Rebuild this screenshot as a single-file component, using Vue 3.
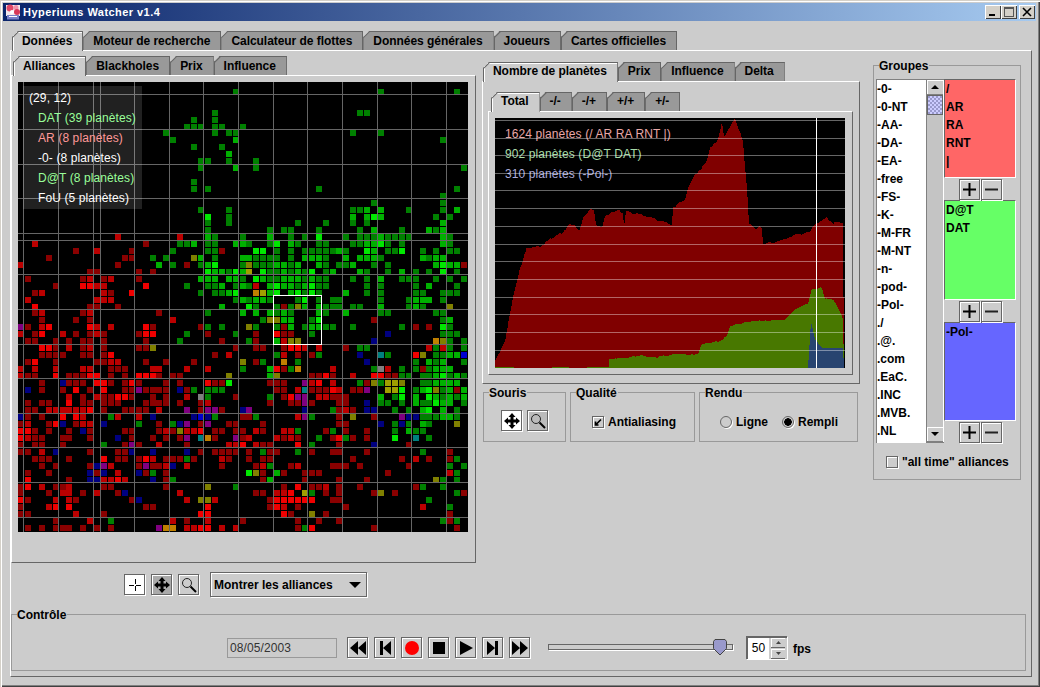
<script setup>
const mainTabs = ['Données', 'Moteur de recherche', 'Calculateur de flottes', 'Données générales', 'Joueurs', 'Cartes officielles']
const mapTabs = ['Alliances', 'Blackholes', 'Prix', 'Influence']
const chartTabs = ['Nombre de planètes', 'Prix', 'Influence', 'Delta']
const chartSubTabs = ['Total', '-/-', '-/+', '+/+', '+/-']
const alliances = ['-0-', '-0-NT', '-AA-', '-DA-', '-EA-', '-free', '-FS-', '-K-', '-M-FR', '-M-NT', '-n-', '-pod-', '-Pol-', './', '.@.', '.com', '.EaC.', '.INC', '.MVB.', '.NL']
const groups = [
  { color: 'red', names: ['/', 'AR', 'RA', 'RNT', '|'] },
  { color: 'green', names: ['D@T', 'DAT'] },
  { color: 'blue', names: ['-Pol-'] },
]

const colors = {
  r: '#8a0000', s: '#bb0000', R: '#f00000',
  g: '#008000', G: '#00b000', H: '#00e800',
  b: '#000080', B: '#0000d0', P: '#800080',
  o: '#808000', y: '#a0a000', O: '#c08000',
  t: '#008080', a: '#808080',
}

// one line per row of the map, each token is <colour><column>
const rows = {
  1: 'g31 g52 g63',
  4: 'g28 g49 g50',
  5: 'g25 g28',
  6: 'g24 g25 g26 g28 g29 g32',
  7: 'g21 g28 g30 g31 g48 g52',
  8: 'g22 G31 g61',
  9: 'g25 g29',
  10: 'G30',
  11: 'g26 g27 g30 g34',
  12: 'g26 G31 g34 g64',
  14: 'g25',
  15: 'g25 g27 g43 g63',
  16: 'g61',
  17: 'g51 g61',
  18: 'g26 g30 g48 g49 G50 G52 g56 g61 G63',
  19: 'H27 g30 G48 G50 H51 G52 g60 g62',
  20: 'g27 g30 g40 g44 g48 g50 G61',
  21: 'g27 g36 g38 g39 g43 g49 G51 g55 G59 g60 G61',
  22: 's14 s23 G27 g28 g32 G36 g39 g41 H43 g47 g49 g50 g51 G52 g53 g54 g55 g56 G61 g62',
  23: 's2 r18 g23 g24 G25 g27 g28 G31 G32 g33 g36 H37 G39 g40 g43 g44 g48 g49 G50 G51 H52 g53 g55 G61 g62',
  24: 'r8 s11 r16 g22 g27 g28 r29 H34 H35 g37 g39 g41 g42 g43 g44 g45 G46 g47 H50 G51 g53 g54 H55 g58 g60 g62 g63',
  25: 'r4 r15 r16 g19 g21 o25 G26 g28 G32 G33 g34 g35 g36 g37 g39 G41 G42 G43 g44 G47 G49 G50 G51 g52 G58 g59 G60 G61',
  26: 's0 r14 G20 g22 r24 g26 G27 H28 g32 o33 g34 g35 g36 G37 G38 g39 G40 G43 g44 g46 g47 G48 g51 g53 G60 H61 G62 G63 r64',
  27: 'r10 r11 r17 r19 H27 G28 G29 g30 H31 G32 y33 H35 g36 g37 G38 g39 G40 g41 H42 g44 G45 G49 g50 g53 G55 g57 g59 H61 g63',
  28: 'r1 r9 s10 r12 s13 r17 G26 G27 G28 G30 G31 g32 H34 G35 g36 g37 G38 G39 G40 g41 G42 g43 g44 g48 g50 G52 g55 g56 g57 g60 g62 g64',
  29: 'r5 R9 R10 s11 s12 R18 g24 g27 g28 G29 g31 G32 g33 s34 G36 H37 G38 G39 g40 G41 H42 g43 g44 g50 g52 g57 G59 g63',
  30: 'r2 s3 s12 r13 R16 g26 g28 g29 G30 H31 O34 y35 G36 H37 G39 H40 g41 H42 g43 G47 g50 g52 g57 g58 g61 g62 g63',
  31: 's1 s11 s12 s13 g31 G32 g33 G34 G35 g36 g40 H41 g43 g45 g46 g52 g56 G57 G58 G59 g61',
  32: 'R2 r10 r11 r14 G29 H33 g34 g37 r38 g39 o40 G41 G43 g44 g45 g46 g48 g49 G52 g56 G57 g58 o62',
  33: 'r2 s3 r9 s10 r20 g27 G32 G34 G36 g37 G38 g39 G43 g44 G47 g52 g53 g60 g61',
  34: 'r3 r8 r10 s22 g35 o36 o37 G38 G39 g42 H43 r51 g61 G62',
  35: 'P0 r1 s3 R4 R10 s11 s13 R18 r19 r26 g27 g29 o33 g34 g37 r38 G39 g41 G42 G43 g44 g45 g48 g55 r57 r59 H61 g62',
  36: 's0 r2 R3 s6 r8 r10 s11 r12 r17 R18 R19 g24 r27 g31 r34 R37 r38 r39 g42 b53 g61 g62 g63',
  37: 'r1 r2 r5 r7 r9 r10 r12 r18 g23 r29 g33 r34 G37 s38 o39 o40 b51 O60 o61 g62 g64',
  38: 'R3 R4 r5 s7 r9 s10 r12 r17 r18 o19 r31 r34 r35 r38 R39 R40 s41 s43 r47 g49 g50 s59 g60 s61 g62 g64',
  39: 'r3 r4 r5 r6 r9 r10 r12 R13 r28 s30 g37 s38 r40 r42 g43 b49 t52 g53 R57 o58 g60 g61 G62 G63 B64',
  40: 'r1 R2 r5 r11 r12 s13 s14 r18 r21 r25 o32 r34 g35 O38 g40 b50 g57 G59 g60 G61 g64',
  41: 's0 s2 s5 s9 s10 r13 r14 r15 s19 s20 s24 s27 g32 G36 R37 r38 g39 O40 s45 g51 a52 s53 g55 g57 r58 g59 G60 G61 G62',
  42: 's0 r1 r2 R5 r7 r8 r9 R10 R11 r13 r15 R17 R18 R19 r20 r22 r23 o30 G36 o37 r42 r43 R44 r45 s48 R51 R52 r53 r54 g55 g56 g58 g59 G60 H61 g62 G63 g64',
  43: 'r3 b6 r7 r8 r9 R11 R12 r13 r15 R16 r17 r21 r23 R27 r28 r29 H30 r36 r37 r38 P41 s42 R43 s45 g49 r50 o51 g52 y53 y54 o55 g58 g59 G60 G61 G62 G63',
  44: 'b1 r3 r6 R8 r10 R12 r15 r16 P17 r18 r19 r20 r21 b23 r24 g25 g27 g28 g29 r37 r38 s40 t41 r42 r43 r44 R45 s46 r48 r49 P50 y53 y54 H55 g57 G58 H59 o60 g61 G62 r63 G64',
  45: 's7 r9 s11 r12 r13 R14 R15 r16 r19 r21 s24 a26 g27 r31 g36 r38 R39 P40 P41 s43 s44 r45 r46 r47 G52 g54 H55 G57 H59 G60 g61 G62 g63 G64',
  46: 'r1 r3 r4 R7 r9 r10 r12 r13 r14 r18 r19 r20 r21 r23 r26 s27 r36 r39 r40 P41 r42 r46 r47 b50 g52 g53 g55 G57 g58 g59 H60 G61 G62 g64',
  47: 'r1 r2 s4 s5 s6 s7 s8 s9 R10 r12 r15 r16 r17 r18 s20 P24 r26 P27 P28 r29 b32 P33 b41 g45 r46 s47 r48 b50 b51 g54 g56 G58 H59 G61 g63',
  48: 'b0 r1 r3 R6 R8 s9 g13 s14 s17 b19 b25 B26 b27 g28 r32 r33 g34 s40 P41 g42 r46 o48 r51 P55 b56 b57 g58 g59 g60 G61 G62 g63',
  49: 'r0 s1 r4 R5 b6 r8 s9 s10 b12 g17 r20 g22 b23 P24 r26 P27 r30 r31 r35 r46 r47 b52 g54 b55 g56 G58 g59 o63',
  50: 'R0 R1 r2 r4 r7 b9 r10 r15 r16 r20 s21 r22 o23 s24 s25 R26 r28 r29 r31 r32 s34 r35 s38 s39 g40 r44 g45 r47 r50 g54 G56 g57 g58',
  51: 'R0 s1 r2 r3 r6 r7 r10 b14 r16 r19 r21 r23 P24 t26 O27 r28 P31 r32 s33 s37 r38 s39 r40 g43 r45 R46 g47 r48 r50 H54 t57 g59',
  52: 'r0 r2 r3 r6 g12 r15 P16 r17 s20 r24 s30 s31 R32 s34 r35 r36 R40 g42 r46 b51 r56',
  53: 'r0 r1 s3 b5 r10 r14 r15 b16 b19 b24 r26 r28 r29 r30 r31 r33 g35 r36 r37 g40 r42 r45 r46 r50 g58 r62',
  54: 'r2 r3 r4 r7 R12 r14 r15 r17 R18 s19 r21 r22 r23 g24 r25 s29 r30 r33 r35 r36 r48 r55 s57 r59 r62 g63',
  55: 'r3 r5 r10 b11 P12 s13 r17 P18 r19 r20 s21 b22 s24 r29 r34 s35 g36 r39 s40 r45 r46 r47 r49 r56 g62 g64',
  56: 'r1 r4 b10 r11 b12 s14 b17 r18 g19 r21 H33 o34 r35 G37 r38 r41 r42 r43 r53 s62 g63',
  57: 'R1 r7 b10 b11 s12 s13 R14 s15 b19 r21 g22 r35 G36 r41 r46 r50 o60 g61 g63',
  58: 'r0 R1 s3 r5 r6 s7 r12 r13 r21 o27 g31 r38 R40 r42 r43 s44 r46 r49 r57 g58 g61',
  59: 'r0 r4 s6 s7 r9 s11 r14 b15 s23 r34 r35 s37 s38 R39 y41 g42 r44 r46 r51 o52 r54 g63 r64',
  60: 'R0 r1 s5 s7 r8 r16 b17 s24 o26 o27 s28 r36 R37 R38 R39 R40 R41 R42 r45 r46 g59',
  61: 'r0 s4 R5 R7 r18 r19 R27 r36 R37 s38 r40 r47 s58 g62',
  62: 'r0 r1 s8 r12 R26 R27 R38 r39 o42 r44 r62',
  63: 'r5 s10 g13 s22 r24 s27 r32 r40 r43 r46 g61 r62 g63',
  64: 'r1 r3 r5 r6 r7 r9 r11 r13 P20 O21 O22 s24 s25 R26 R27 s29 s31 r40 g41 R42 r51 r63',
}

const pitch = 450 / 65
const cells = Object.entries(rows).flatMap(([row, tokens]) =>
  tokens.split(' ').map((token) => ({
    x: 18 + Math.round(Number(token.slice(1)) * pitch),
    y: 82 + Math.round(Number(row) * pitch),
    fill: colors[token[0]],
  }))
)

const mapHLines = [94, 129, 164, 198, 233, 240, 274, 309, 344, 378, 413, 447, 482, 517]
const mapVLines = [23, 58, 93, 100, 134, 169, 203, 238, 273, 307, 342, 377, 411, 446]
const legend = [
  { text: 'DAT (39 planètes)', color: '#99ff99' },
  { text: 'AR (8 planètes)', color: '#ff9999' },
  { text: '-0- (8 planètes)', color: '#ffffff' },
  { text: 'D@T (8 planètes)', color: '#99ff99' },
  { text: 'FoU (5 planètes)', color: '#ffffff' },
]

// the curves are noisy day by day: walk along the outline and shake it a little
function jagged(outline, amp) {
  const pts = outline.split(' ').map((p) => p.split(',').map(Number))
  const out = []
  for (let i = 0; i < pts.length - 1; i++) {
    const [x0, y0] = pts[i]
    const [x1, y1] = pts[i + 1]
    const steps = Math.max(1, Math.floor((x1 - x0) / 2))
    for (let k = 0; k < steps; k++) {
      const x = x0 + ((x1 - x0) * k) / steps
      const y = y0 + ((y1 - y0) * k) / steps
      const noise = y < 366 ? amp * Math.sin(x * 12.9898) * Math.cos(x * 4.1414) : 0
      out.push(`${x},${(y + noise).toFixed(1)}`)
    }
  }
  const last = pts[pts.length - 1]
  out.push(`${last[0]},${last[1]}`)
  return out.join(' ')
}

const redArea = jagged('495,367 495,360 500,350 505,340 513,297 520,267 526,250 526,248 532,246 540,246 550,238 562,232 570,223 575,225 579,230 583,217 590,209 594,209 596,223 602,227 605,215 612,212 617,209 623,212 624,226 626,211 635,212 645,215 657,218 672,223 673,207 680,201 685,200 688,188 693,177 703,165 707,160 710,148 718,138 722,122 724,136 730,125 735,117 738,125 743,141 747,188 749,223 757,228 759,225 762,228 763,243 780,240 793,235 810,232 814,223 827,217 833,222 843,221 844,367', 1.5)
const greenArea = jagged('495,367 495,366 513,366 514,367 552,367 552,366 568,366 569,367 587,367 587,366 609,366 609,358 623,357 640,354 657,356 677,353 690,354 698,353 701,343 720,340 727,335 730,325 747,321 772,319 785,318 797,307 808,303 812,288 822,287 825,298 833,298 838,307 843,318 844,367', 1)
const blueArea = '808,367 811,321 815,338 822,347 843,347 844,367'
const chartLines = [119, 137, 154, 172, 189, 207, 225, 243, 260, 278, 296, 313, 331, 349]
const chartLabels = [
  { text: '1624 planètes (/ AR RA RNT |)', y: 137, color: '#e8a8a8' },
  { text: '902 planètes (D@T DAT)', y: 157, color: '#a8dca8' },
  { text: '310 planètes (-Pol-)', y: 177, color: '#acacdc' },
]

const mediaIcons = [
  { d: 'M0 8 8 1V15ZM8 8 16 1V15Z', fill: '#000' },
  { d: 'M3 1H6V15H3ZM6 8 14 1V15Z', fill: '#000' },
  { d: 'M8 1A7 7 0 1 1 8 15 7 7 0 1 1 8 1Z', fill: '#f00' },
  { d: 'M2 2H14V14H2Z', fill: '#000' },
  { d: 'M2 1 15 8 2 15Z', fill: '#000' },
  { d: 'M2 1 10 8 2 15ZM10 1H13V15H10Z', fill: '#000' },
  { d: 'M0 1 8 8 0 15ZM8 1 16 8 8 15Z', fill: '#000' },
]
const moveIcon = 'M8 0 11.5 4H9.5V6.500H12V4.500L16 8 12 11.500V9.500H9.500V12H11.500L8 16 4.500 12H6.500V9.500H4V11.500L0 8 4 4.500V6.500H6.500V4H4.500Z'
</script>

<template>
  <div class="window">
    <div class="titlebar">
      <svg class="app-icon" width="16" height="16" viewBox="0 0 16 16">
        <path d="M1 1H15V12H1Z" fill="#f4e8ec" />
        <circle cx="5" cy="4" r="3.500" fill="#e04868" />
        <circle cx="11" cy="3.500" r="2.500" fill="#f090a8" />
        <circle cx="12" cy="8" r="3" fill="#d83858" />
        <circle cx="7" cy="8" r="2" fill="#fff" />
        <path d="M2 11H14V15.500H2Z" fill="#7880c8" />
        <path d="M4 12H12V13H4Z" fill="#fff" />
      </svg>
      <span class="title-text">Hyperiums Watcher v1.4</span>
      <div class="win-buttons">
        <span class="win-btn"><svg width="12" height="10" viewBox="0 0 12 10"><path d="M2 7H8V9H2Z" /></svg></span>
        <span class="win-btn"><svg width="12" height="10" viewBox="0 0 12 10"><path d="M1 0H11V10H1ZM2 2V9H10V2Z" fill-rule="evenodd" fill="#555" /></svg></span>
        <span class="win-btn close"><svg width="12" height="10" viewBox="0 0 12 10"><path d="M2 1 10 9M10 1 2 9" stroke="#000" stroke-width="1.600" /></svg></span>
      </div>
    </div>

    <div class="main">
      <div class="tabs">
        <div v-for="(t, i) in mainTabs" :key="t" class="tab" :class="{ active: i === 0 }">{{ t }}</div>
      </div>
      <div class="panel main-panel">
        <div class="content">
          <div class="left-col">
            <div class="tabs">
              <div v-for="(t, i) in mapTabs" :key="t" class="tab" :class="{ active: i === 0 }">{{ t }}</div>
            </div>
            <div class="panel map-panel">
              <div class="map">
                <svg width="450" height="450" viewBox="18 82 450 450" shape-rendering="crispEdges">
                  <rect x="18" y="82" width="450" height="450" fill="#000" />
                  <rect v-for="(c, i) in cells" :key="i" :x="c.x" :y="c.y" width="6" height="6" :fill="c.fill" />
                  <rect v-for="y in mapHLines" :key="'h' + y" x="18" :y="y" width="450" height="1" fill="#666" />
                  <rect v-for="x in mapVLines" :key="'v' + x" :x="x" y="82" width="1" height="450" fill="#666" />
                  <rect x="273.500" y="295.500" width="48" height="49" fill="none" stroke="#fff" />
                </svg>
                <div class="map-info">
                  <div class="map-coord">(29, 12)</div>
                  <div v-for="l in legend" :key="l.text" class="map-line" :style="{ color: l.color }">{{ l.text }}</div>
                </div>
              </div>
            </div>
            <div class="toolbar">
              <span class="btn btn-white">
                <svg width="16" height="16" viewBox="0 0 16 16" shape-rendering="crispEdges"><path d="M8 2V7M8 9V14M2 8H7M9 8H14" stroke="#000" fill="none" /></svg>
              </span>
              <span class="btn btn-dark">
                <svg width="16" height="16" viewBox="0 0 16 16"><path :d="moveIcon" /></svg>
              </span>
              <span class="btn">
                <svg width="16" height="16" viewBox="0 0 16 16"><circle cx="6" cy="6" r="4.500" fill="none" stroke="#222" /><path d="M9.500 9.500 15 15" stroke="#000" stroke-width="2" /></svg>
              </span>
              <div class="combo">
                <span>Montrer les alliances</span>
                <svg width="12" height="6" viewBox="0 0 12 6"><path d="M0 0H12L6 6Z" /></svg>
              </div>
            </div>
          </div>

          <div class="mid-col">
            <div class="tabs chart-tabs">
              <div v-for="(t, i) in chartTabs" :key="t" class="tab" :class="{ active: i === 0 }">{{ t }}</div>
            </div>
            <div class="panel chart-panel">
              <div class="tabs small-tabs">
                <div v-for="(t, i) in chartSubTabs" :key="t" class="tab" :class="{ active: i === 0, narrow: i > 0 }">{{ t }}</div>
              </div>
              <div class="panel inner-panel">
                <svg class="chart" width="350" height="250" viewBox="495 117 350 250" shape-rendering="crispEdges">
                  <rect x="495" y="117" width="350" height="250" fill="#000" />
                  <polygon :points="redArea" fill="#800000" />
                  <polygon :points="greenArea" fill="#487800" />
                  <polygon :points="blueArea" fill="#284470" />
                  <text v-for="l in chartLabels" :key="l.y" class="chart-label" x="505" :y="l.y" :fill="l.color">{{ l.text }}</text>
                  <rect v-for="y in chartLines" :key="y" x="495" :y="y" width="350" height="1" fill="#fff" fill-opacity="0.4" />
                  <rect x="816" y="117" width="1" height="250" fill="#fff" />
                </svg>
              </div>
            </div>
            <div class="options">
              <div class="group souris">
                <span class="group-title">Souris</span>
                <span class="btn btn-white">
                  <svg width="16" height="16" viewBox="0 0 16 16"><path :d="moveIcon" /></svg>
                </span>
                <span class="btn btn-soft">
                  <svg width="16" height="16" viewBox="0 0 16 16"><circle cx="6" cy="6" r="4.500" fill="none" stroke="#222" /><path d="M9.500 9.500 15 15" stroke="#000" stroke-width="2" /></svg>
                </span>
              </div>
              <div class="group qualite">
                <span class="group-title">Qualité</span>
                <span class="check checked">
                  <svg width="10" height="10" viewBox="0 0 10 10"><path d="M2.500 4.500V8H5.500M2.500 8 8 2.500" stroke="#000" stroke-width="1.700" fill="none" /></svg>
                </span>
                <span class="opt-label">Antialiasing</span>
              </div>
              <div class="group rendu">
                <span class="group-title">Rendu</span>
                <span class="radio"></span>
                <span class="opt-label ligne">Ligne</span>
                <span class="radio on"></span>
                <span class="opt-label">Rempli</span>
              </div>
            </div>
          </div>

          <div class="group groupes">
            <span class="group-title">Groupes</span>
            <div class="groupes-body">
              <div class="list-box">
                <div class="list">
                  <div v-for="a in alliances" :key="a" class="list-row">{{ a }}</div>
                </div>
                <div class="scrollbar">
                  <span class="scroll-btn"><svg width="8" height="4" viewBox="0 0 8 4"><path d="M4 0 8 4H0Z" /></svg></span>
                  <span class="scroll-thumb"></span>
                  <span class="scroll-track"></span>
                  <span class="scroll-btn"><svg width="8" height="4" viewBox="0 0 8 4"><path d="M0 0H8L4 4Z" /></svg></span>
                </div>
              </div>
              <div class="group-lists">
                <div v-for="g in groups" :key="g.color" class="group-block">
                  <div class="color-list" :class="g.color">
                    <div v-for="n in g.names" :key="n" class="list-row">{{ n }}</div>
                  </div>
                  <div class="plus-minus">
                    <span class="btn"><svg width="15" height="15" viewBox="0 0 15 15"><path d="M1 6.500H14V8.500H1ZM6.500 1H8.500V14H6.500Z" /></svg></span>
                    <span class="btn"><svg width="15" height="15" viewBox="0 0 15 15"><path d="M1 6.500H14V8.500H1Z" fill="#222" /></svg></span>
                  </div>
                </div>
              </div>
            </div>
            <div class="all-time">
              <span class="check"></span>
              <span class="opt-label">"all time" alliances</span>
            </div>
          </div>
        </div>

        <div class="group controle">
          <span class="group-title">Contrôle</span>
          <div class="date-field">08/05/2003</div>
          <div class="media">
            <span v-for="(m, i) in mediaIcons" :key="i" class="btn">
              <svg width="16" height="16" viewBox="0 0 16 16"><path :d="m.d" :fill="m.fill" /></svg>
            </span>
          </div>
          <div class="slider">
            <svg class="slider-thumb" width="16" height="17" viewBox="0 0 16 17">
              <path d="M1.500 2.500 3 .5H13L14.500 2.500V9.500L8 16 1.500 9.500Z" fill="#9999cc" stroke="#444" />
            </svg>
          </div>
          <div class="spinner">
            <span class="spin-value">50</span>
            <div class="spin-buttons">
              <span class="spin-btn"><svg width="5" height="3" viewBox="0 0 5 3"><path d="M2.500 0 5 3H0Z" fill="#444" /></svg></span>
              <span class="spin-btn"><svg width="5" height="3" viewBox="0 0 5 3"><path d="M0 0H5L2.500 3Z" fill="#444" /></svg></span>
            </div>
          </div>
          <span class="fps">fps</span>
        </div>
      </div>
    </div>
  </div>
</template>

<style>
html,
body {
  margin: 0;
  background: #cccccc;
}
</style>

<style scoped>
.window {
  box-sizing: border-box;
  width: 1040px;
  height: 687px;
  padding: 3px 4px 4px 3px;
  background: #cccccc;
  box-shadow: inset 1px 1px 0 #d4d0c8, inset 2px 2px 0 #fff, inset -1px -1px 0 #404040, inset -2px -2px 0 #808080;
  font: bold 12px "Liberation Sans", Arial, sans-serif;
  color: #000;
  overflow: hidden;
}

.titlebar {
  display: flex;
  align-items: center;
  height: 18px;
  padding-left: 2px;
  background: linear-gradient(90deg, #0a246a, #a6caf0);
}

.app-icon {
  margin-right: 2px;
}

.title-text {
  font-size: 11px;
  color: #fff;
  letter-spacing: 0.45px;
}

.win-buttons {
  display: flex;
  margin-left: auto;
  margin-right: 1px;
}

.win-btn {
  display: flex;
  align-items: center;
  justify-content: center;
  width: 16px;
  height: 14px;
  background: #d4d0c8;
  box-shadow: inset 1px 1px 0 #fff, inset -1px -1px 0 #404040;
}

.win-btn.close {
  margin-left: 2px;
}

.main {
  padding: 10px 0 0 7px;
}

.tabs {
  position: relative;
  z-index: 1;
  display: flex;
  height: 19px;
  padding-left: 2px;
}

.tab {
  position: relative;
  box-sizing: border-box;
  display: flex;
  align-items: center;
  height: 19px;
  padding: 0 10px 1px 9px;
  background: #999999;
  border-top: 1px solid #666;
  border-right: 1px solid #666;
  border-left: 1px solid #666;
  clip-path: polygon(6px 0, 100% 0, 100% 100%, 0 100%, 0 6px);
  white-space: nowrap;
  letter-spacing: -0.05px;
}

.tab::before {
  content: "";
  position: absolute;
  left: -2px;
  top: 1.5px;
  width: 9px;
  height: 1px;
  background: #666;
  transform: rotate(-45deg);
}

.tab.active {
  height: 20px;
  padding-bottom: 2px;
  background: #cccccc;
  border-right-color: #666;
  box-shadow: inset 1px 1px 0 #fff;
}

.chart-tabs .tab {
  padding-bottom: 2px;
}

.chart-tabs .tab.active {
  padding-bottom: 3px;
}

.small-tabs .tab {
  padding-bottom: 3px;
}

.small-tabs .tab.active {
  padding-bottom: 4px;
}

.tab.narrow {
  padding-left: 9px;
  padding-right: 10px;
}

.panel {
  box-sizing: border-box;
  border-top: 1px solid #fff;
  border-left: 1px solid #fff;
  border-right: 1px solid #666;
  border-bottom: 1px solid #666;
}

.main-panel {
  width: 1022px;
  height: 627px;
}

.content {
  display: flex;
  height: 563px;
}

.left-col {
  width: 465px;
  padding-top: 5px;
}

.map-panel {
  height: 488px;
  padding: 6px;
}

.map {
  position: relative;
  width: 450px;
  height: 450px;
}

.map svg {
  display: block;
}

.map-info {
  position: absolute;
  left: 5px;
  top: 4px;
  width: 119px;
  height: 123px;
  background: rgba(255, 255, 255, 0.13);
  font-weight: normal;
  color: #fff;
  line-height: 20px;
  letter-spacing: 0.1px;
}

.map-coord {
  padding: 2px 0 0 6px;
}

.map-line {
  padding-left: 15px;
}

.toolbar {
  display: flex;
  align-items: center;
  gap: 6px;
  height: 25px;
  margin-top: 9px;
  padding-left: 113px;
}

.btn {
  box-sizing: border-box;
  display: inline-flex;
  align-items: center;
  justify-content: center;
  width: 21px;
  height: 21px;
  border: 1px solid #666;
  background: #cccccc;
  box-shadow: inset 1px 1px 0 #fff, 1px 1px 0 #fff;
}

.btn-white {
  background: #fff;
}

.btn-dark {
  background: #aaaaaa;
}

.btn-soft {
  background: #bbbbbb;
}

.combo {
  box-sizing: border-box;
  display: flex;
  align-items: center;
  justify-content: space-between;
  width: 157px;
  height: 25px;
  margin-left: 5px;
  padding: 0 5px 0 3px;
  border: 1px solid #666;
  box-shadow: inset 1px 1px 0 #fff, 1px 1px 0 #fff;
}

.mid-col {
  width: 378px;
  margin-left: 6px;
  padding-top: 11px;
}

.chart-tabs {
  padding-left: 1px;
}

.chart-panel {
  width: 378px;
  height: 303px;
  padding: 10px 6px 0 5px;
}

.small-tabs {
  padding-left: 3px;
}

.inner-panel {
  width: 365px;
  height: 264px;
  padding: 6px;
}

.chart {
  display: block;
}

.chart-label {
  font: 12px "Liberation Sans", Arial, sans-serif;
  letter-spacing: 0.1px;
}

.options {
  display: flex;
  gap: 4px;
  margin: 8px 0 0 1px;
}

.group {
  position: relative;
  box-sizing: border-box;
  border: 1px solid #999;
}

.group-title {
  position: absolute;
  left: 5px;
  top: -7px;
  padding: 0 1px 0 0;
  background: #cccccc;
  line-height: 14px;
}

.souris {
  display: flex;
  gap: 5px;
  width: 83px;
  height: 50px;
  padding: 17px 0 0 17px;
}

.qualite {
  display: flex;
  align-items: center;
  width: 125px;
  height: 50px;
  padding: 10px 0 0 21px;
}

.rendu {
  display: flex;
  align-items: center;
  width: 159px;
  height: 50px;
  padding: 10px 0 0 20px;
}

.check {
  box-sizing: border-box;
  display: inline-flex;
  align-items: center;
  justify-content: center;
  width: 12px;
  height: 12px;
  border: 1px solid #666;
  box-shadow: inset 1px 1px 0 #fff, 1px 1px 0 #fff;
}

.opt-label {
  margin-left: 4px;
}

.radio {
  box-sizing: border-box;
  position: relative;
  display: inline-block;
  width: 12px;
  height: 12px;
  border: 1px solid #666;
  border-radius: 50%;
  box-shadow: 1px 1px 0 #fff;
}

.radio.on {
  background: radial-gradient(circle, #000 0 3.5px, transparent 4px);
}

.ligne {
  margin-right: 14px;
}

.groupes {
  width: 148px;
  height: 415px;
  margin: 14px 0 0 13px;
  padding: 13px 0 0 2px;
}

.groupes-body {
  display: flex;
}

.list-box {
  display: flex;
  width: 68px;
  height: 364px;
  border-top: 1px solid #808080;
  border-left: 1px solid #808080;
  border-bottom: 1px solid #808080;
  box-sizing: border-box;
}

.list {
  width: 50px;
  height: 363px;
  overflow: hidden;
  background: #fff;
  border-right: 1px solid #808080;
  box-sizing: border-box;
}

.list-row {
  height: 18px;
  line-height: 18px;
}

.scrollbar {
  display: flex;
  flex-direction: column;
  width: 16px;
  height: 362px;
  border-right: 1px solid #fff;
}

.scroll-btn {
  display: flex;
  align-items: center;
  justify-content: center;
  height: 15px;
  flex: none;
  box-sizing: border-box;
  background: #cccccc;
  border-bottom: 1px solid #808080;
  box-shadow: inset 1px 1px 0 #fff;
}

.scroll-thumb {
  height: 20px;
  flex: none;
  box-sizing: border-box;
  border: 1px solid #666;
  background: repeating-conic-gradient(#ccccff 0 25%, #9999cc 0 50%) 0 0 / 4px 4px;
}

.scroll-track {
  flex: 1;
  background: #c4c4c4;
}

.group-lists {
  width: 72px;
}

.color-list {
  box-sizing: border-box;
  height: 99px;
  padding-left: 1px;
  border-top: 1px solid #666;
  border-left: 1px solid #666;
  border-right: 1px solid #fff;
  border-bottom: 1px solid #fff;
}

.color-list.red {
  background: #ff6666;
}

.color-list.green {
  background: #66ff66;
}

.color-list.blue {
  background: #6666ff;
}

.plus-minus {
  display: flex;
  justify-content: center;
  gap: 1px;
  height: 21px;
  padding-top: 1px;
  box-sizing: content-box;
  padding-left: 1px;
}

.group-block:nth-child(2) .color-list {
  height: 100px;
}

.all-time {
  display: flex;
  align-items: center;
  margin: 12px 0 0 10px;
}

.controle {
  display: flex;
  align-items: flex-start;
  width: 1015px;
  height: 57px;
  margin-top: 0;
  padding: 23px 0 0 215px;
}

.date-field {
  box-sizing: border-box;
  width: 110px;
  height: 20px;
  padding-left: 2px;
  border: 1px solid #999;
  color: #333;
  font-weight: normal;
  line-height: 18px;
  letter-spacing: 0.1px;
}

.media {
  display: flex;
  gap: 6px;
  margin: -1px 0 0 10px;
}

.slider {
  position: relative;
  box-sizing: border-box;
  width: 185px;
  height: 6px;
  margin: 6px 0 0 18px;
  border: 1px solid #666;
  box-shadow: 1px 1px 0 #fff;
}

.slider-thumb {
  position: absolute;
  left: 163px;
  top: -6px;
}

.spinner {
  box-sizing: border-box;
  display: flex;
  width: 41px;
  height: 23px;
  margin: -2px 0 0 13px;
  border-top: 2px solid #666;
  border-left: 2px solid #666;
  box-shadow: 1px 1px 0 #fff;
}

.spin-value {
  width: 21px;
  background: #fff;
  font-weight: normal;
  line-height: 20px;
  text-align: center;
}

.spin-buttons {
  flex: 1;
  display: flex;
  flex-direction: column;
  gap: 1px;
  padding: 0 2px;
}

.spin-btn {
  flex: 1;
  display: flex;
  align-items: center;
  justify-content: center;
  border-bottom: 1px solid #666;
  box-shadow: inset 1px 1px 0 #fff;
}

.fps {
  margin: 4px 0 0 6px;
}
</style>
